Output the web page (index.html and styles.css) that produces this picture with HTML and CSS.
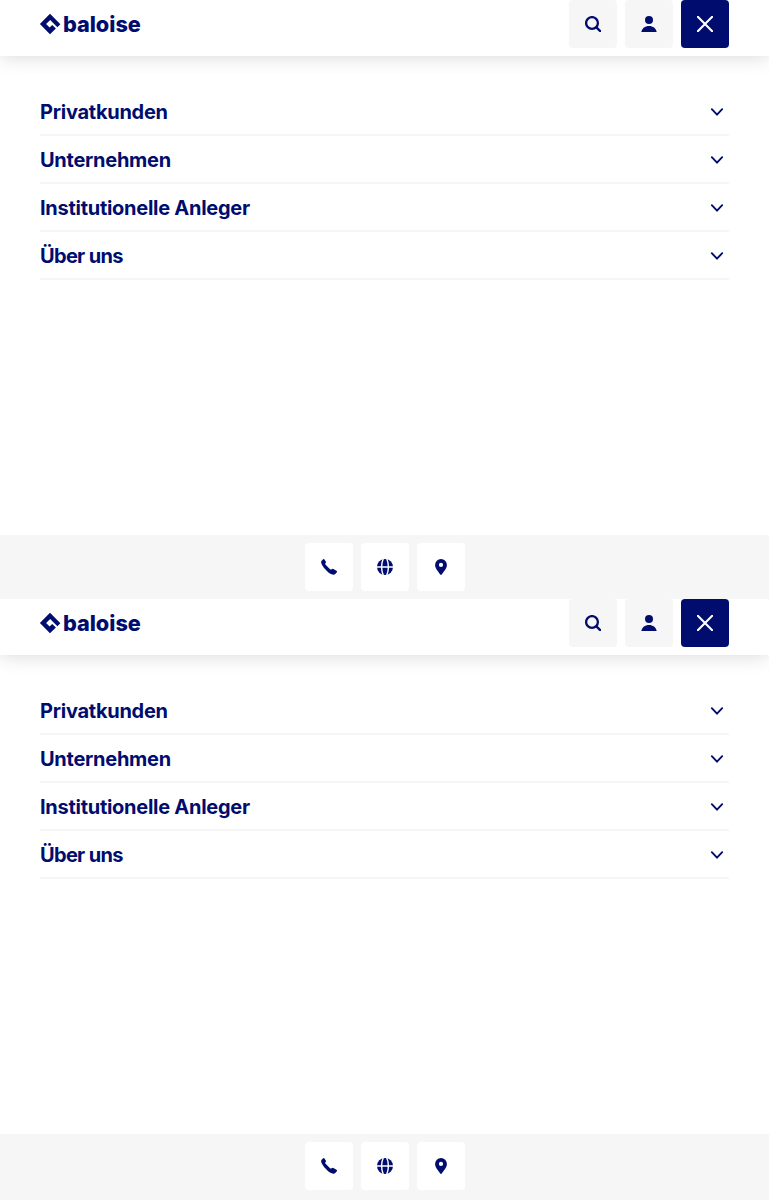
FILE: index.html
```
<!DOCTYPE html>
<html lang="de">
<head>
<meta charset="utf-8">
<title>Baloise</title>
<link rel="stylesheet" href="styles.css">
</head>
<body>
<svg class="sprite" aria-hidden="true">
  <symbol id="logo" viewBox="0 0 104 32" overflow="visible"><path d="M10 5.8 20.4 16.2 17.4 19.2 10.2 12 6.1 16.1 9.6 19.6 12.2 17 15.9 20.4 10 26.3-.1 16.1Z"/><text x="22.9" y="23.6" textLength="78" lengthAdjust="spacingAndGlyphs">baloise</text></symbol>
  <symbol id="search" viewBox="0 0 16 16"><g class="line"><circle cx="7" cy="7" r="5.9"/><path d="m11.4 11.4 3.8 3.8"/></g></symbol>
  <symbol id="user" viewBox="0 0 16 16"><circle cx="8" cy="4" r="4"/><path d="M.3 16C1 12.3 4 10 8 10s7 2.3 7.7 6Z"/></symbol>
  <symbol id="close" viewBox="0 0 16 16"><path class="line" d="m.8.8 14.4 14.4M15.2.8.8 15.2"/></symbol>
  <symbol id="chevron" viewBox="0 0 16 16"><path class="line" d="M2.8 5.2 8 10.7l5.2-5.5"/></symbol>
  <symbol id="phone" viewBox="0 0 16 16"><path d="M.4 2 1.9.4Q2.8-.3 3.5.6L4.9 2.7Q5.2 3.4 4.6 4.1q-.8.7-.2 1.5L9 10.2q.8.7 1.6 0 .9-.8 1.8-.3l3 1.9q1 .7.4 1.5l-1.5 1.8q-1.2.9-2.9.5C8.6 14.7 6.8 13.2 4.5 10.6 2.4 8.2 1 6.2.3 4.2Q0 2.9.4 2Z"/></symbol>
  <symbol id="globe" viewBox="0 0 16 16"><circle cx="8" cy="8" r="8"/><path class="grid" d="M0 8h16M6.2-.2Q3 8 6.2 16.2M9.8-.2q3.2 8.2 0 16.4"/></symbol>
  <symbol id="pin" viewBox="0 0 16 16"><path fill-rule="evenodd" d="M8 0a5.9 5.9 0 0 0-5.9 6c0 3.9 3.6 6.7 5.1 9.6q.8.8 1.6 0c1.5-2.9 5.1-5.7 5.1-9.6A5.9 5.9 0 0 0 8 0Zm0 3.8a2.1 2.1 0 1 1 0 4.2 2.1 2.1 0 0 1 0-4.2Z"/></symbol>
</svg>

<section class="panel">
  <header class="bar">
    <a class="brand"><svg class="logo"><use href="#logo"/></svg></a>
    <div class="actions">
      <button class="btn" aria-label="Suche"><svg class="icon"><use href="#search"/></svg></button>
      <button class="btn" aria-label="Login"><svg class="icon"><use href="#user"/></svg></button>
      <button class="btn btn-primary" aria-label="Schliessen"><svg class="icon"><use href="#close"/></svg></button>
    </div>
  </header>
  <nav class="menu">
    <a class="item"><span class="t1">Privatkunden</span><svg class="icon"><use href="#chevron"/></svg></a>
    <a class="item"><span class="t2">Unternehmen</span><svg class="icon"><use href="#chevron"/></svg></a>
    <a class="item"><span class="t3">Institutionelle Anleger</span><svg class="icon"><use href="#chevron"/></svg></a>
    <a class="item"><span class="t4">Über uns</span><svg class="icon"><use href="#chevron"/></svg></a>
  </nav>
  <footer class="foot">
    <button class="btn btn-white" aria-label="Telefon"><svg class="icon"><use href="#phone"/></svg></button>
    <button class="btn btn-white" aria-label="Sprache"><svg class="icon"><use href="#globe"/></svg></button>
    <button class="btn btn-white" aria-label="Standort"><svg class="icon"><use href="#pin"/></svg></button>
  </footer>
</section>

<section class="panel panel-last">
  <header class="bar">
    <a class="brand"><svg class="logo"><use href="#logo"/></svg></a>
    <div class="actions">
      <button class="btn" aria-label="Suche"><svg class="icon"><use href="#search"/></svg></button>
      <button class="btn" aria-label="Login"><svg class="icon"><use href="#user"/></svg></button>
      <button class="btn btn-primary" aria-label="Schliessen"><svg class="icon"><use href="#close"/></svg></button>
    </div>
  </header>
  <nav class="menu">
    <a class="item"><span class="t1">Privatkunden</span><svg class="icon"><use href="#chevron"/></svg></a>
    <a class="item"><span class="t2">Unternehmen</span><svg class="icon"><use href="#chevron"/></svg></a>
    <a class="item"><span class="t3">Institutionelle Anleger</span><svg class="icon"><use href="#chevron"/></svg></a>
    <a class="item"><span class="t4">Über uns</span><svg class="icon"><use href="#chevron"/></svg></a>
  </nav>
  <footer class="foot">
    <button class="btn btn-white" aria-label="Telefon"><svg class="icon"><use href="#phone"/></svg></button>
    <button class="btn btn-white" aria-label="Sprache"><svg class="icon"><use href="#globe"/></svg></button>
    <button class="btn btn-white" aria-label="Standort"><svg class="icon"><use href="#pin"/></svg></button>
  </footer>
</section>
</body>
</html>
```
FILE: styles.css
```
* { box-sizing: border-box; }
body { margin: 0; background: #fff; color: #000d6e; font-family: Inter, "Liberation Sans", sans-serif; }
.sprite { position: absolute; width: 0; height: 0; }
.panel { display: flex; flex-direction: column; height: 599px; }
.panel-last { height: 601px; }
.bar { display: flex; justify-content: space-between; flex: none; height: 56px; padding: 0 40px; background: #fff; box-shadow: 0 0 20px rgba(0, 0, 0, .17); clip-path: inset(0 0 -30px 0); }
.brand { padding-top: 8px; }
.logo { display: block; width: 104px; height: 32px; fill: currentColor; overflow: visible; }
.logo, text { font: 800 22px Inter, sans-serif; }
.actions { display: flex; gap: 8px; }
.btn { display: flex; align-items: center; justify-content: center; width: 48px; height: 48px; padding: 0; border: 0; border-radius: 4px; background: #f6f6f6; color: #000d6e; }
.btn-primary { background: #000d6e; color: #fff; }
.btn-white { background: #fff; }
.icon { display: block; width: 16px; height: 16px; fill: currentColor; overflow: visible; }
.line { fill: none; stroke: currentColor; stroke-width: 2.1px; stroke-linecap: round; stroke-linejoin: round; }
#search .line { stroke-width: 2.3px; }
#chevron .line { stroke-width: 1.9px; }
.grid { fill: none; stroke: #fff; stroke-width: 1.4px; }
.menu { flex: 1; padding: 32px 40px 0; }
.item { display: flex; align-items: center; justify-content: space-between; height: 48px; padding: 2px 4px 0 0; border-bottom: 2px solid #f6f6f6; font-size: 20px; line-height: 24px; font-weight: 700; white-space: nowrap; }
.t1 { letter-spacing: -.26px; }
.t2 { letter-spacing: -.27px; }
.t3 { letter-spacing: -.27px; }
.t4 { letter-spacing: -.68px; }
.foot { display: flex; justify-content: center; flex: none; gap: 8px; height: 64px; padding: 8px 0 8px 1px; background: #f6f6f6; }
.panel-last .foot { height: 66px; }
```
